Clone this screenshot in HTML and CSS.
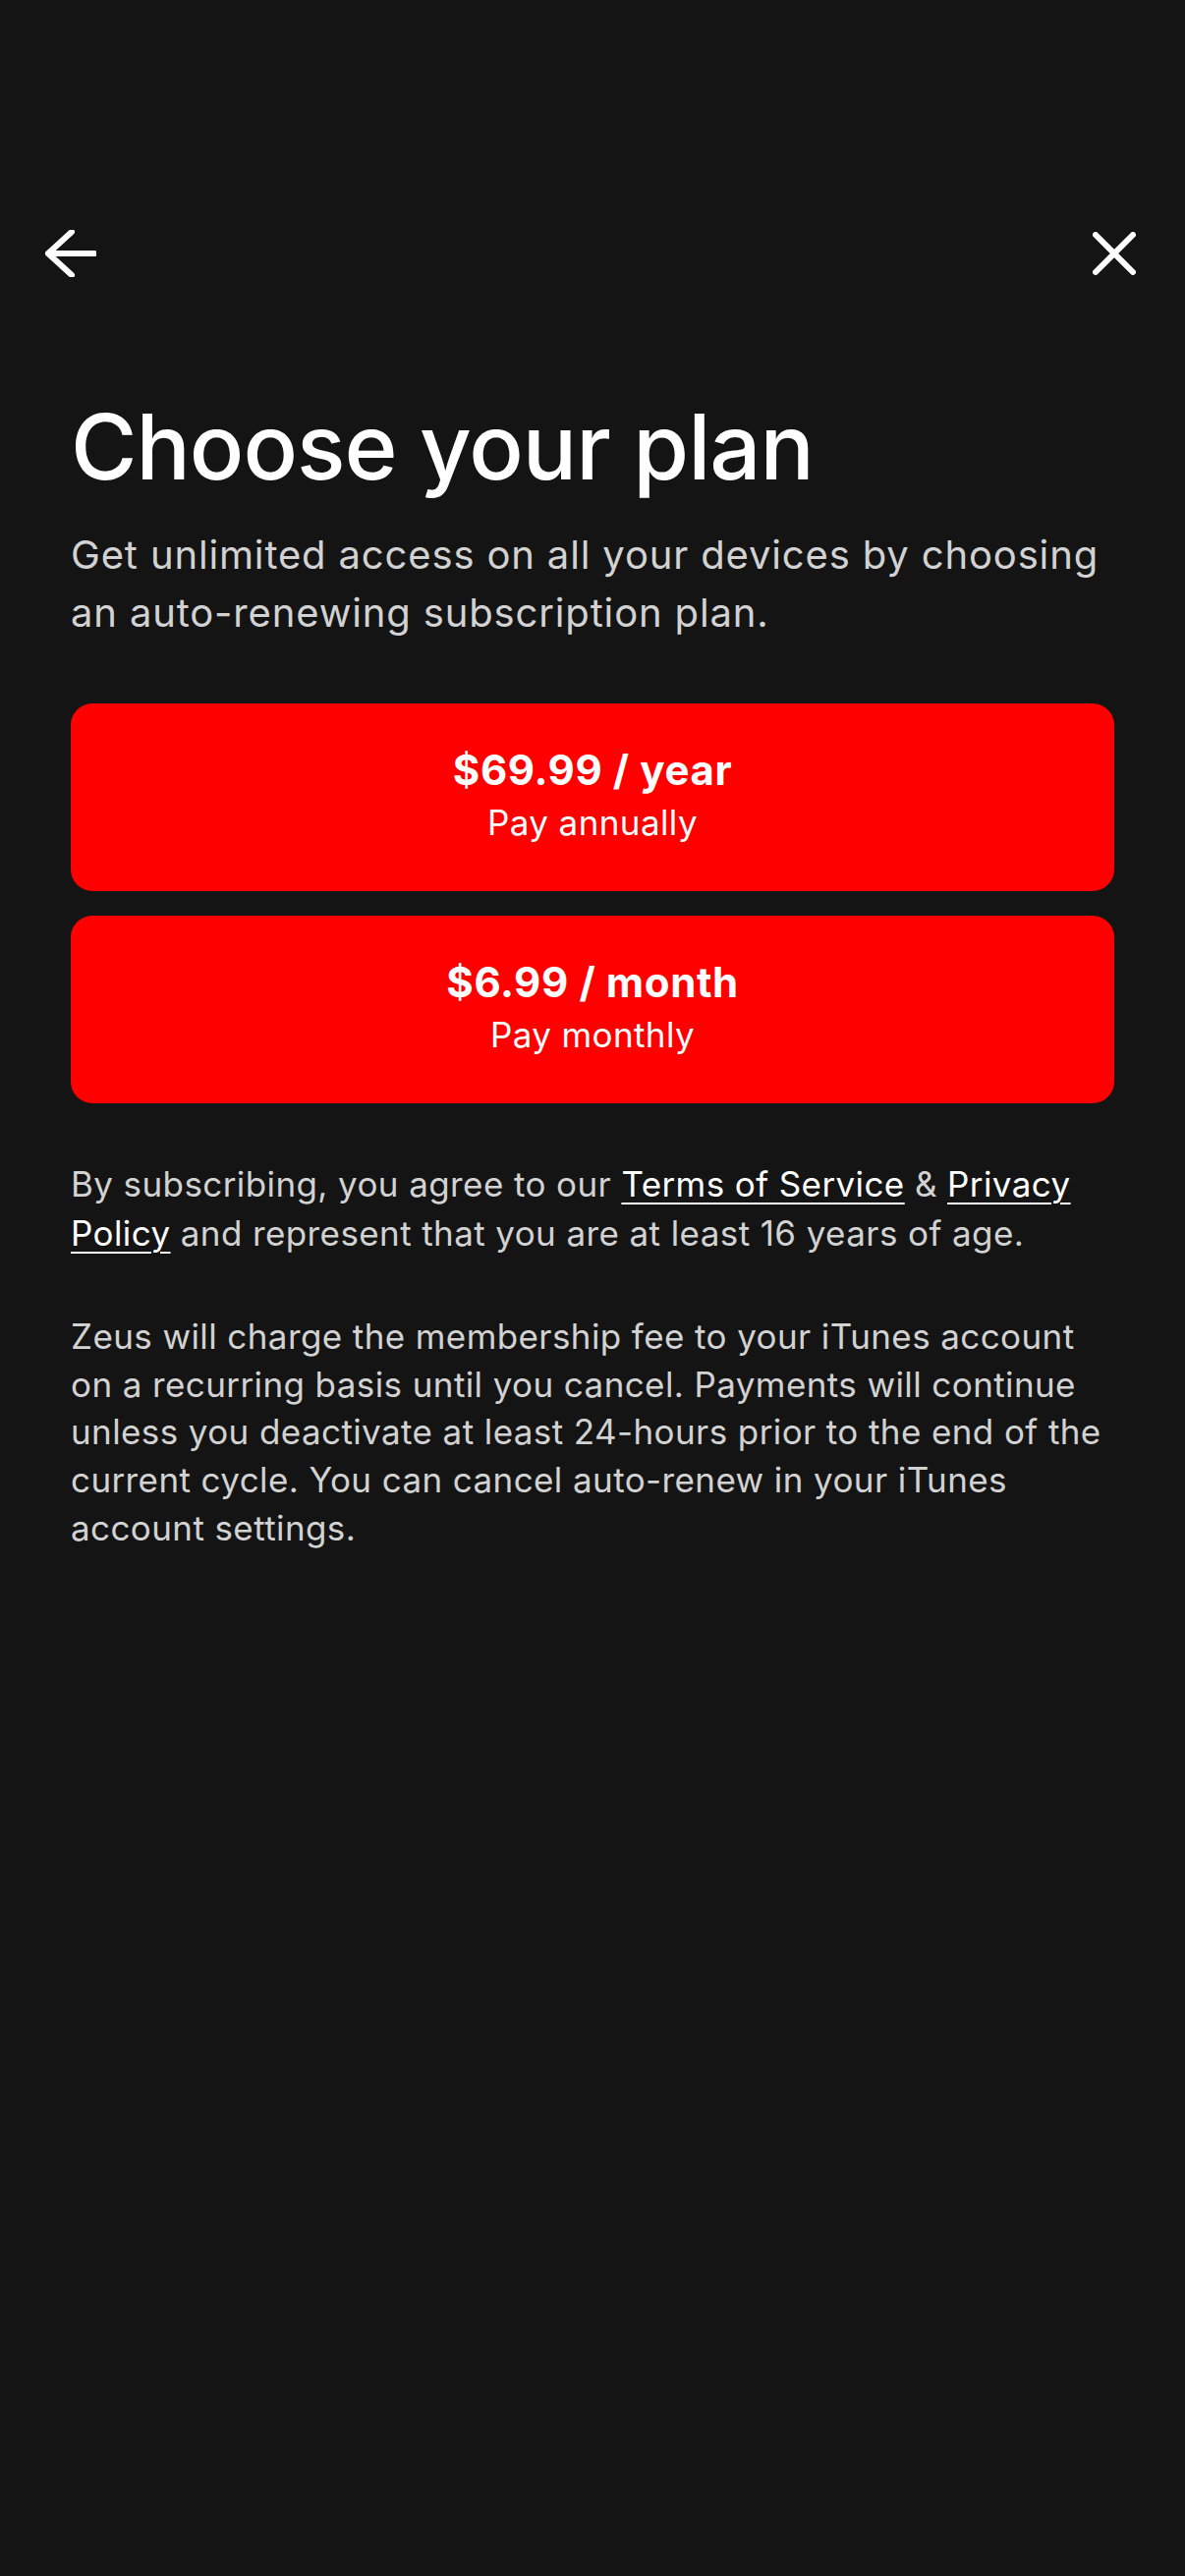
FILE: index.html
```html
<!DOCTYPE html>
<html lang="en">
<head>
  <meta charset="UTF-8" />
  <meta name="viewport" content="width=device-width, initial-scale=1.0">
  <title>Choose your plan</title>
  <link rel="stylesheet" href="styles.css">
</head>
<body>

  <div class="topbar">
    <a class="icon-btn" href="#" aria-label="Back">
      <svg width="52" height="48" viewBox="0 0 52 48">
        <path d="M27 2 L3 24 L27 46 M3 24 H50" fill="none" stroke="#fff" stroke-width="6" stroke-linecap="round" stroke-linejoin="round"/>
      </svg>
    </a>
    <a class="icon-btn" href="#" aria-label="Close">
      <svg width="44" height="44" viewBox="0 0 44 44">
        <path d="M3 3 L41 41 M41 3 L3 41" fill="none" stroke="#fff" stroke-width="6" stroke-linecap="round"/>
      </svg>
    </a>
  </div>

  <div class="main">
    <h1>Choose your plan</h1>
    <p class="lead">Get unlimited access on all your devices by choosing an auto-renewing subscription plan.</p>

    <div class="plans">
      <button class="plan">
        <span class="price">$69.99 / year</span>
        <span class="period">Pay annually</span>
      </button>
      <button class="plan">
        <span class="price">$6.99 / month</span>
        <span class="period">Pay monthly</span>
      </button>
    </div>

    <p class="legal">By subscribing, you agree to our <a href="#">Terms of Service</a> &amp; <a href="#">Privacy Policy</a> and represent that you are at least 16 years of age.</p>

    <p class="legal billing">Zeus will charge the membership fee to your iTunes account on a recurring basis until you cancel. Payments will continue unless you deactivate at least 24-hours prior to the end of the current cycle. You can cancel auto-renew in your iTunes account settings.</p>
  </div>

</body>
</html>
```

FILE: styles.css
```css
* {
  box-sizing: border-box;
}
body {
  margin: 0;
  font-family: Inter, "Noto Sans", Arial, sans-serif;
  background: #141414;
  color: #fff;
  min-height: 100vh;
}

.topbar {
  display: flex;
  justify-content: space-between;
  align-items: center;
  height: 80px;
  margin-top: 218px;
  padding: 0 50px 0 46px;
}
.icon-btn {
  display: flex;
  align-items: center;
}

.main {
  padding: 102px 72px 0;
}

h1 {
  margin: 0;
  font-size: 92px;
  font-weight: 500;
  line-height: 110px;
  letter-spacing: -1px;
}

.lead {
  margin: 25px 0 0;
  font-size: 40px;
  line-height: 59px;
  letter-spacing: 0.85px;
  color: #d2d2d2;
}

.plans {
  display: flex;
  flex-direction: column;
  gap: 25px;
  margin-top: 63px;
}

.plan {
  height: 191px;
  border: none;
  border-radius: 22px;
  background: #ff0000;
  color: #fff;
  font-family: inherit;
  display: flex;
  flex-direction: column;
  align-items: center;
  justify-content: center;
  gap: 6px;
  padding: 0 0 6px;
}
.price {
  font-size: 42px;
  font-weight: 700;
  line-height: 50px;
  letter-spacing: 0.6px;
}
.period {
  font-size: 35px;
  line-height: 44px;
  letter-spacing: 0.4px;
}

.legal {
  margin: 57px 0 0;
  font-size: 35px;
  line-height: 50px;
  letter-spacing: 0.4px;
  color: #d2d2d2;
}
.legal a {
  color: #fff;
  text-decoration: underline;
  text-decoration-thickness: 2px;
  text-underline-offset: 6px;
}
.billing {
  margin-top: 56px;
  line-height: 48.7px;
}
```
